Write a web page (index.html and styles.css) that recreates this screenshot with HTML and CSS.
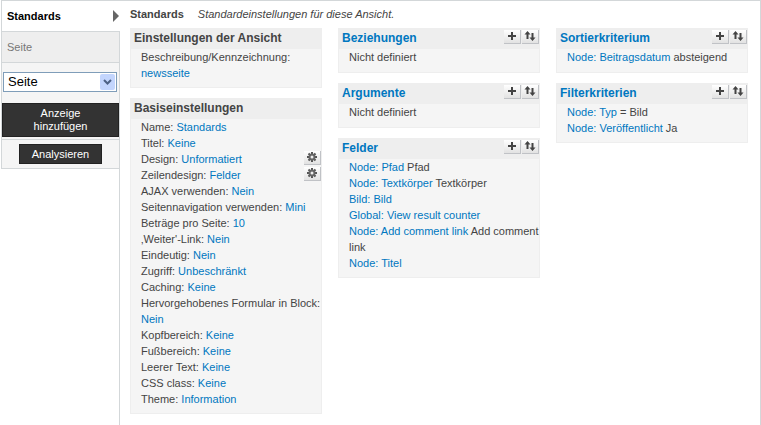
FILE: index.html
```html
<!DOCTYPE html>
<html lang="de">
<head>
<meta charset="UTF-8">
<title>Standards</title>
<link rel="stylesheet" href="styles.css">
</head>
<body>
<svg class="sprite" aria-hidden="true">
	<symbol id="icon-add" viewBox="0 0 16 13">
		<path d="M7 2h2v3h3v2h-3v3h-2v-3h-3v-2h3z" fill="#444"/>
	</symbol>
	<symbol id="icon-sort" viewBox="0 0 16 13">
		<path d="M5.500 1l3 3.500h-2v4.500h-2v-4.500h-2zM10.500 11l-3-3.500h2v-4.500h2v4.500h2z" fill="#444"/>
	</symbol>
	<symbol id="icon-gear" viewBox="0 0 16 13">
		<path d="M8 1v10M3 6h10M4.500 2.500l7 7M11.500 2.500l-7 7" stroke="#555" stroke-width="2"/>
		<circle cx="8" cy="6" r="2.500" fill="#eee" stroke="#666" stroke-width="2"/>
	</symbol>
</svg>
<div class="views-ui">
	<div class="sidebar">
		<div class="tabset">
			<a class="tab active" href="#standards">Standards</a>
			<a class="tab" href="#seite">Seite</a>
			<form class="add-display">
				<div class="select-wrap">
					<select class="display-type" aria-label="Anzeigetyp"><option>Seite</option></select>
					<span class="select-arrow"><svg width="9" height="7" viewBox="0 0 9 7"><path d="M1 1l3.500 3.500l3.500-3.500" fill="none" stroke="#4d6185" stroke-width="2"/></svg></span>
				</div>
				<button class="button" type="button">Anzeige hinzufügen</button>
			</form>
			<div class="analyze"><button class="button" type="button">Analysieren</button></div>
		</div>
	</div>
	<div class="content" id="standards">
		<div class="display-title"><strong>Standards</strong><em>Standardeinstellungen für diese Ansicht.</em></div>
		<div class="columns">
			<div class="column">
				<div class="category">
					<h2>Einstellungen der Ansicht</h2>
					<div class="row">Beschreibung/Kennzeichnung: <a href="#">newsseite</a></div>
				</div>
				<div class="category">
					<h2>Basiseinstellungen</h2>
					<div class="row">Name: <a href="#">Standards</a></div>
					<div class="row">Titel: <a href="#">Keine</a></div>
					<div class="row with-icon"><span>Design: <a href="#">Unformatiert</a></span><button class="icon" type="button" aria-label="Design-Optionen"><svg><use href="#icon-gear"/></svg></button></div>
					<div class="row with-icon"><span>Zeilendesign: <a href="#">Felder</a></span><button class="icon" type="button" aria-label="Zeilendesign-Optionen"><svg><use href="#icon-gear"/></svg></button></div>
					<div class="row">AJAX verwenden: <a href="#">Nein</a></div>
					<div class="row">Seitennavigation verwenden: <a href="#">Mini</a></div>
					<div class="row">Beträge pro Seite: <a href="#">10</a></div>
					<div class="row">‚Weiter'-Link: <a href="#">Nein</a></div>
					<div class="row">Eindeutig: <a href="#">Nein</a></div>
					<div class="row">Zugriff: <a href="#">Unbeschränkt</a></div>
					<div class="row">Caching: <a href="#">Keine</a></div>
					<div class="row">Hervorgehobenes Formular in Block: <a href="#">Nein</a></div>
					<div class="row">Kopfbereich: <a href="#">Keine</a></div>
					<div class="row">Fußbereich: <a href="#">Keine</a></div>
					<div class="row">Leerer Text: <a href="#">Keine</a></div>
					<div class="row">CSS class: <a href="#">Keine</a></div>
					<div class="row">Theme: <a href="#">Information</a></div>
				</div>
			</div>
			<div class="column">
				<div class="category">
					<h2><a href="#">Beziehungen</a><span class="icons"><button class="icon" type="button" aria-label="Hinzufügen"><svg><use href="#icon-add"/></svg></button><button class="icon" type="button" aria-label="Sortieren"><svg><use href="#icon-sort"/></svg></button></span></h2>
					<div class="row">Nicht definiert</div>
				</div>
				<div class="category">
					<h2><a href="#">Argumente</a><span class="icons"><button class="icon" type="button" aria-label="Hinzufügen"><svg><use href="#icon-add"/></svg></button><button class="icon" type="button" aria-label="Sortieren"><svg><use href="#icon-sort"/></svg></button></span></h2>
					<div class="row">Nicht definiert</div>
				</div>
				<div class="category">
					<h2><a href="#">Felder</a><span class="icons"><button class="icon" type="button" aria-label="Hinzufügen"><svg><use href="#icon-add"/></svg></button><button class="icon" type="button" aria-label="Sortieren"><svg><use href="#icon-sort"/></svg></button></span></h2>
					<div class="row"><a href="#">Node: Pfad</a> Pfad</div>
					<div class="row"><a href="#">Node: Textkörper</a> Textkörper</div>
					<div class="row"><a href="#">Bild: Bild</a></div>
					<div class="row"><a href="#">Global: View result counter</a></div>
					<div class="row"><a href="#">Node: Add comment link</a> Add comment link</div>
					<div class="row"><a href="#">Node: Titel</a></div>
				</div>
			</div>
			<div class="column">
				<div class="category">
					<h2><a href="#">Sortierkriterium</a><span class="icons"><button class="icon" type="button" aria-label="Hinzufügen"><svg><use href="#icon-add"/></svg></button><button class="icon" type="button" aria-label="Sortieren"><svg><use href="#icon-sort"/></svg></button></span></h2>
					<div class="row"><a href="#">Node: Beitragsdatum</a> absteigend</div>
				</div>
				<div class="category">
					<h2><a href="#">Filterkriterien</a><span class="icons"><button class="icon" type="button" aria-label="Hinzufügen"><svg><use href="#icon-add"/></svg></button><button class="icon" type="button" aria-label="Sortieren"><svg><use href="#icon-sort"/></svg></button></span></h2>
					<div class="row"><a href="#">Node: Typ</a> = Bild</div>
					<div class="row"><a href="#">Node: Veröffentlicht</a> Ja</div>
				</div>
			</div>
		</div>
	</div>
</div>
</body>
</html>
```

FILE: styles.css
```css
* { box-sizing: border-box; }
body { margin: 0; background: #fff; color: #444; font: 11px/16px "Liberation Sans", Arial, sans-serif; }
a { color: #0077c0; text-decoration: none; }
.sprite { display: none; }

.views-ui { display: flex; min-height: 100vh; margin-left: 1px; border-top: 1px solid #d3d7d9; border-right: 1px solid #d3d7d9; }

/* display tabs */
.sidebar { flex: 0 0 119px; border-right: 1px solid #d3d7d9; }
.tabset { margin-right: -1px; background: #f5f5f5; border: 1px solid #d3d7d9; border-top: 0; }
.tab { display: flex; align-items: center; height: 31px; padding: 0 5px; border-bottom: 1px solid #d3d7d9; background: #eee; color: #777; }
.tab.active { justify-content: space-between; margin-right: -1px; padding-right: 1px; background: #fff; color: #000; font-weight: bold; }
.tab.active:after { content: ""; border: 6px solid transparent; border-left-color: #666; border-right: 0; }
.add-display { padding: 9px 0 2px; border-bottom: 1px solid #d3d7d9; }
.select-wrap { position: relative; margin: 0 2px 11px 1px; }
.display-type { display: block; width: 100%; height: 20px; padding: 0 4px; border: 1px solid #7f9db9; border-radius: 0; background: #fff; color: #000; font: 13px/16px "Liberation Sans", Arial, sans-serif; appearance: none; }
.select-arrow { position: absolute; top: 2px; right: 2px; display: flex; align-items: center; justify-content: center; width: 15px; height: 16px; border-radius: 2px; background: #c3d5fd; pointer-events: none; }
.button { border: 1px solid #222; background: #333; color: #fff; font: 11px/13px "Liberation Sans", Arial, sans-serif; }
.add-display .button { display: block; width: 100%; padding: 3px 24px; }
.analyze { padding: 4px 0; text-align: center; }
.analyze .button { display: block; height: 20px; margin: 0 auto; padding: 0 12px; }

/* settings columns */
.content { flex: 1; min-width: 0; padding: 5px 12px 11px 10px; }
.display-title { height: 22px; }
.display-title em { margin-left: 14px; }
.columns { display: grid; grid-template-columns: 192fr 202fr 192fr; gap: 16px; }
.column { display: flex; flex-direction: column; gap: 10px; min-width: 0; }
.category { min-height: 45px; padding-bottom: 6px; border: 1px solid #eee; border-top: 0; background: #f5f5f5; }
.category h2 { display: flex; justify-content: space-between; height: 21px; margin: 0; padding: 0 0 0 3px; background: #eee; font-size: 12px; line-height: 20px; }
.icons { display: flex; gap: 1px; padding-top: 2px; }
.row { padding-left: 10px; }
.with-icon { display: flex; justify-content: space-between; }
.icon { display: block; width: 17px; height: 14px; padding: 0; border: 0; border-right: 1px solid #c0c2c6; border-bottom: 1px solid #c0c2c6; background: linear-gradient(#fff, #e2e2e2); }
.icon svg { display: block; width: 16px; height: 13px; }
```
